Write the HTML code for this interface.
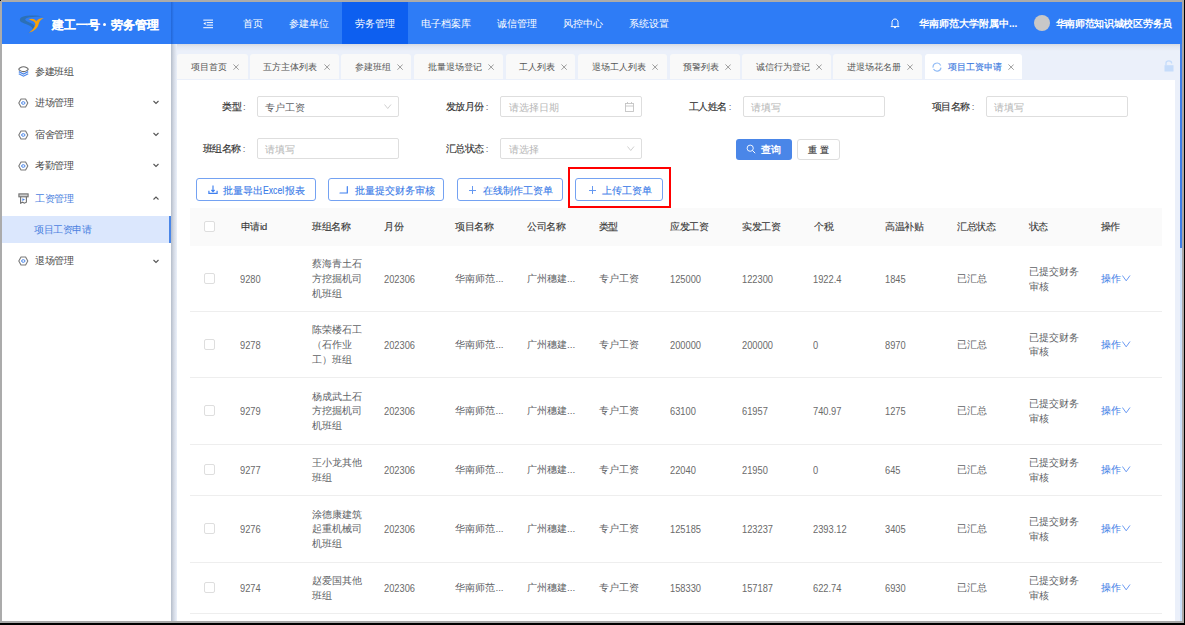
<!DOCTYPE html><html><head><meta charset="utf-8"><style>
*{box-sizing:border-box;margin:0;padding:0}
html,body{width:1185px;height:625px;overflow:hidden;background:#000}
body{position:relative;font-family:"Liberation Sans",sans-serif;font-size:10px;color:#606266}
.a{position:absolute;white-space:nowrap}
svg{display:block}
.nav{top:2px;height:42px;line-height:44px;color:#fff;font-size:9.5px;text-align:center}
.mi{letter-spacing:-0.45px;font-size:9.6px;color:#4a4a4a;line-height:14px;height:14px}
.tab{top:54px;height:25px;background:#f9f9f9;border-radius:3px 3px 0 0}
.tt{font-size:9.3px;color:#555;line-height:12px;height:12px;top:61px}
.lbl{letter-spacing:-0.45px;font-size:9.5px;color:#333;-webkit-text-stroke:0.15px #333;line-height:14px;height:14px}
.lbl i{font-style:normal;color:#666;-webkit-text-stroke:0;margin-left:2px}
.inp{height:21px;width:142px;border:1px solid #dedede;border-radius:2px;background:#fff}
.ph{font-size:9.75px;color:#b5b5b5;line-height:14px;height:14px}
.btn{height:23px;border:1px solid #74a2f2;border-radius:3px;background:#fff}
.bt{font-size:9.8px;color:#3a7be8;-webkit-text-stroke:0.12px #3a7be8;line-height:14px;height:14px}
.th{letter-spacing:-0.45px;color:#383838;-webkit-text-stroke:0.12px #383838;font-size:9.85px;line-height:14px;height:14px}
.md{-webkit-text-stroke:0.12px currentColor}
.td.dg{font-size:10.8px;transform:scaleX(0.86);transform-origin:0 0;color:#6a6a6a}
.td{font-size:9.85px;color:#606266;line-height:14.7px}
.rb{left:190px;width:972px;height:1px;background:#eeeeee}
.cb{width:11px;height:11px;border:1px solid #dedede;border-radius:2px;background:#fff}
</style></head><body>
<div class="a " style="left:0;top:0;width:1185px;height:625px;background:#000"></div>
<div class="a " style="left:1px;top:0;width:1183px;height:2px;background:#ababab"></div>
<div class="a " style="left:0;top:1px;width:1183px;height:1px;background:#aeaba6"></div>
<div class="a " style="left:0;top:1px;width:2px;height:622px;background:#ababab"></div>
<div class="a " style="left:1182px;top:1px;width:2px;height:622px;background:#a9a8a6"></div>
<div class="a " style="left:0;top:621px;width:1184px;height:2px;background:#a8a8a8"></div>
<div class="a " style="left:2px;top:2px;width:1180px;height:619px;background:#ebf0fa"></div>
<div class="a " style="left:2px;top:2px;width:1180px;height:42px;background:#2e7cf6"></div>
<div class="a " style="left:16px;top:12px;width:32px;height:24px"><svg width="32" height="24" viewBox="16 12 32 24">
<path d="M43.6 16.6 C38 15.2 27 14.8 22 17 C19 18.5 19.5 21 21.5 22.3 C24.5 24 31 25 32.5 28.5 C33 30.5 30 32 27.5 33 C31 31 35 29.5 34.6 26.5 C34 23.5 28 22.3 25.8 20.5 C24.5 19 26 17.8 30 17.2 C35 16.5 40 16.3 43.6 16.6 Z" fill="#2c70b6"/>
<path d="M28.7 19.8 C31 18.2 34.5 18.6 36.2 21.2 C38 19.3 41 18 43.6 18.1 C41.5 19.3 39.5 21 38.8 23.5 C38 27.5 35 31 28.7 32.8 C32 30.5 34.8 27.5 35.4 24.5 C35.6 22.5 33 20.5 28.7 19.8 Z" fill="#f6a10b"/>
</svg></div>
<div class="a " style="left:51.5px;top:16.5px;font-size:11.5px;font-weight:bold;color:#fff;line-height:16px;-webkit-text-stroke:0.1px #fff">建工一号</div>
<div class="a " style="left:110.5px;top:16.5px;font-size:11.5px;font-weight:bold;color:#fff;line-height:16px;-webkit-text-stroke:0.1px #fff">劳务管理</div>
<div class="a " style="left:102.5px;top:22.5px;width:3.2px;height:3.2px;border-radius:50%;background:#fff"></div>
<div class="a " style="left:171px;top:2px;width:3px;height:42px;background:linear-gradient(to right,rgba(0,40,120,.25),rgba(0,40,120,0))"></div>
<div class="a " style="left:203px;top:19px;width:11px;height:10px"><svg width="11" height="10" viewBox="0 0 11 10"><rect x="0.3" y="0.6" width="9.7" height="1" fill="#fff"/><rect x="3.6" y="3.1" width="6.4" height="1" fill="#fff"/><rect x="3.6" y="5.6" width="6.4" height="1" fill="#fff"/><rect x="0.3" y="8.2" width="9.7" height="1" fill="#fff"/><path d="M0.4 4.4 L2.6 2.9 L2.6 5.9 Z" fill="#fff"/></svg></div>
<div class="a nav" style="left:230px;width:46px;">首页</div>
<div class="a nav" style="left:276px;width:66px;">参建单位</div>
<div class="a nav" style="left:342px;width:66px;background:#0d5ff0;">劳务管理</div>
<div class="a nav" style="left:408px;width:76px;">电子档案库</div>
<div class="a nav" style="left:484px;width:66px;">诚信管理</div>
<div class="a nav" style="left:550px;width:66px;">风控中心</div>
<div class="a nav" style="left:616px;width:66px;">系统设置</div>
<div class="a " style="left:890px;top:18px;width:10px;height:11px"><svg width="10" height="11" viewBox="0 0 10 11"><path d="M5 1 C2.8 1 2 2.8 2 4.5 L2 7.5 L1 8.6 L9 8.6 L8 7.5 L8 4.5 C8 2.8 7.2 1 5 1 Z" fill="none" stroke="#fff" stroke-width="1"/><path d="M4 9.6 L6 9.6" stroke="#fff" stroke-width="1"/></svg></div>
<div class="a " style="left:919px;top:17px;font-size:10px;font-weight:bold;color:#fff;line-height:14px">华南师范大学附属中...</div>
<div class="a " style="left:1034px;top:15px;width:16px;height:16px;border-radius:50%;background:#c8c8c8"></div>
<div class="a " style="left:1055.5px;top:17px;font-size:10px;font-weight:bold;color:#fff;line-height:14px;letter-spacing:-0.3px">华南师范知识城校区劳务员</div>
<div class="a " style="left:2px;top:44px;width:169px;height:577px;background:#fff"></div>
<div class="a " style="left:171px;top:44px;width:1009px;height:7px;background:linear-gradient(to bottom,#d6dae2,#e4e8f1 40%,#ebf0fa)"></div>
<div class="a " style="left:171px;top:44px;width:6px;height:577px;background:linear-gradient(to right,#b5bdca,#d3d9e4 45%,#ebf0fa)"></div>
<div class="a" style="left:17.5px;top:65.5px;width:11px;height:11px"><svg width="11" height="11" viewBox="0 0 11 11"><path d="M5.5 0.8 C8 0.8 10.2 2.6 10.2 3.2 C10.2 3.8 8 5.6 5.5 5.6 C3 5.6 0.8 3.8 0.8 3.2 C0.8 2.6 3 0.8 5.5 0.8 Z" fill="none" stroke="#6a6a6a" stroke-width="1.1"/><path d="M0.8 5.6 L5.5 8 L10.2 5.6" fill="none" stroke="#4a86e8" stroke-width="1.2"/><path d="M0.8 7.8 L5.5 10.2 L10.2 7.8" fill="none" stroke="#4a86e8" stroke-width="1.2"/></svg></div>
<div class="a mi" style="left:35px;top:65.2px">参建班组</div>
<div class="a" style="left:17.5px;top:97.6px;width:11px;height:10px"><svg width="11" height="10" viewBox="0 0 11 10"><path d="M3 1 L7.6 1 L9.8 5 L7.6 9 L3 9 L0.8 5 Z" fill="none" stroke="#7a7a7a" stroke-width="1.1" stroke-linejoin="round"/><ellipse cx="5.3" cy="5" rx="1.7" ry="1.3" fill="none" stroke="#4a86e8" stroke-width="1"/></svg></div>
<div class="a mi" style="left:35px;top:96.0px">进场管理</div>
<div class="a" style="left:153px;top:100.1px;width:6px;height:5px"><svg width="6" height="5" viewBox="0 0 6 5"><path d="M0.5 1 L3 3.5 L5.5 1" fill="none" stroke="#555" stroke-width="1.1"/></svg></div>
<div class="a" style="left:17.5px;top:129.8px;width:11px;height:10px"><svg width="11" height="10" viewBox="0 0 11 10"><path d="M3 1 L7.6 1 L9.8 5 L7.6 9 L3 9 L0.8 5 Z" fill="none" stroke="#7a7a7a" stroke-width="1.1" stroke-linejoin="round"/><ellipse cx="5.3" cy="5" rx="1.7" ry="1.3" fill="none" stroke="#4a86e8" stroke-width="1"/></svg></div>
<div class="a mi" style="left:35px;top:128.20000000000002px">宿舍管理</div>
<div class="a" style="left:153px;top:132.3px;width:6px;height:5px"><svg width="6" height="5" viewBox="0 0 6 5"><path d="M0.5 1 L3 3.5 L5.5 1" fill="none" stroke="#555" stroke-width="1.1"/></svg></div>
<div class="a" style="left:17.5px;top:160.9px;width:11px;height:10px"><svg width="11" height="10" viewBox="0 0 11 10"><path d="M3 1 L7.6 1 L9.8 5 L7.6 9 L3 9 L0.8 5 Z" fill="none" stroke="#7a7a7a" stroke-width="1.1" stroke-linejoin="round"/><ellipse cx="5.3" cy="5" rx="1.7" ry="1.3" fill="none" stroke="#4a86e8" stroke-width="1"/></svg></div>
<div class="a mi" style="left:35px;top:159.3px">考勤管理</div>
<div class="a" style="left:153px;top:163.4px;width:6px;height:5px"><svg width="6" height="5" viewBox="0 0 6 5"><path d="M0.5 1 L3 3.5 L5.5 1" fill="none" stroke="#555" stroke-width="1.1"/></svg></div>
<div class="a" style="left:17.5px;top:192.5px;width:11px;height:11px"><svg width="11" height="11" viewBox="0 0 11 11"><rect x="0.9" y="0.9" width="9.2" height="2.9" fill="#cfcfcf" stroke="#707070" stroke-width="1.1"/><path d="M2.6 3.8 L2.6 10.2 L4.6 9.2 L6.4 10.2 L8.4 9.2 L8.4 3.8" fill="none" stroke="#707070" stroke-width="1.1"/><path d="M4.4 5.3 L7 6.6 L4.4 7.9 Z" fill="#4a86e8"/></svg></div>
<div class="a mi" style="left:35px;top:191.5px;color:#4a7fe0">工资管理</div>
<div class="a" style="left:153px;top:195.6px;width:6px;height:5px"><svg width="6" height="5" viewBox="0 0 6 5"><path d="M0.5 3.5 L3 1 L5.5 3.5" fill="none" stroke="#555" stroke-width="1.1"/></svg></div>
<div class="a " style="left:2px;top:216px;width:169px;height:26.5px;background:#dbe7fd"></div>
<div class="a " style="left:169px;top:216px;width:2px;height:26.5px;background:#4a86e8"></div>
<div class="a mi" style="left:34px;top:222.5px;color:#4a7fe0">项目工资申请</div>
<div class="a" style="left:17.5px;top:256px;width:11px;height:10px"><svg width="11" height="10" viewBox="0 0 11 10"><path d="M3 1 L7.6 1 L9.8 5 L7.6 9 L3 9 L0.8 5 Z" fill="none" stroke="#7a7a7a" stroke-width="1.1" stroke-linejoin="round"/><ellipse cx="5.3" cy="5" rx="1.7" ry="1.3" fill="none" stroke="#4a86e8" stroke-width="1"/></svg></div>
<div class="a mi" style="left:35px;top:254.4px">退场管理</div>
<div class="a" style="left:153px;top:258.5px;width:6px;height:5px"><svg width="6" height="5" viewBox="0 0 6 5"><path d="M0.5 1 L3 3.5 L5.5 1" fill="none" stroke="#555" stroke-width="1.1"/></svg></div>
<div class="a tab" style="left:177px;width:70.6px;"></div>
<div class="a tt" style="left:190.5px">项目首页</div>
<div class="a" style="left:232.5px;top:63.7px;width:7px;height:7px"><svg width="6.2" height="6.2" viewBox="0 0 7 7"><path d="M0.5 0.5 L6.5 6.5 M6.5 0.5 L0.5 6.5" stroke="#777" stroke-width="0.8"/></svg></div>
<div class="a tab" style="left:249.9px;width:88.79999999999998px;"></div>
<div class="a tt" style="left:263.4px">五方主体列表</div>
<div class="a" style="left:324.0px;top:63.7px;width:7px;height:7px"><svg width="6.2" height="6.2" viewBox="0 0 7 7"><path d="M0.5 0.5 L6.5 6.5 M6.5 0.5 L0.5 6.5" stroke="#777" stroke-width="0.8"/></svg></div>
<div class="a tab" style="left:341px;width:70px;"></div>
<div class="a tt" style="left:354.5px">参建班组</div>
<div class="a" style="left:396.5px;top:63.7px;width:7px;height:7px"><svg width="6.2" height="6.2" viewBox="0 0 7 7"><path d="M0.5 0.5 L6.5 6.5 M6.5 0.5 L0.5 6.5" stroke="#777" stroke-width="0.8"/></svg></div>
<div class="a tab" style="left:414.1px;width:88.69999999999999px;"></div>
<div class="a tt" style="left:427.6px">批量退场登记</div>
<div class="a" style="left:488.20000000000005px;top:63.7px;width:7px;height:7px"><svg width="6.2" height="6.2" viewBox="0 0 7 7"><path d="M0.5 0.5 L6.5 6.5 M6.5 0.5 L0.5 6.5" stroke="#777" stroke-width="0.8"/></svg></div>
<div class="a tab" style="left:505.7px;width:69.40000000000003px;"></div>
<div class="a tt" style="left:519.2px">工人列表</div>
<div class="a" style="left:561.2px;top:63.7px;width:7px;height:7px"><svg width="6.2" height="6.2" viewBox="0 0 7 7"><path d="M0.5 0.5 L6.5 6.5 M6.5 0.5 L0.5 6.5" stroke="#777" stroke-width="0.8"/></svg></div>
<div class="a tab" style="left:578px;width:88.79999999999995px;"></div>
<div class="a tt" style="left:591.5px">退场工人列表</div>
<div class="a" style="left:652.0999999999999px;top:63.7px;width:7px;height:7px"><svg width="6.2" height="6.2" viewBox="0 0 7 7"><path d="M0.5 0.5 L6.5 6.5 M6.5 0.5 L0.5 6.5" stroke="#777" stroke-width="0.8"/></svg></div>
<div class="a tab" style="left:669.8px;width:69.90000000000009px;"></div>
<div class="a tt" style="left:683.3px">预警列表</div>
<div class="a" style="left:725.3px;top:63.7px;width:7px;height:7px"><svg width="6.2" height="6.2" viewBox="0 0 7 7"><path d="M0.5 0.5 L6.5 6.5 M6.5 0.5 L0.5 6.5" stroke="#777" stroke-width="0.8"/></svg></div>
<div class="a tab" style="left:742px;width:88.89999999999998px;"></div>
<div class="a tt" style="left:755.5px">诚信行为登记</div>
<div class="a" style="left:816.0999999999999px;top:63.7px;width:7px;height:7px"><svg width="6.2" height="6.2" viewBox="0 0 7 7"><path d="M0.5 0.5 L6.5 6.5 M6.5 0.5 L0.5 6.5" stroke="#777" stroke-width="0.8"/></svg></div>
<div class="a tab" style="left:833.2px;width:88.69999999999993px;"></div>
<div class="a tt" style="left:846.7px">进退场花名册</div>
<div class="a" style="left:907.3px;top:63.7px;width:7px;height:7px"><svg width="6.2" height="6.2" viewBox="0 0 7 7"><path d="M0.5 0.5 L6.5 6.5 M6.5 0.5 L0.5 6.5" stroke="#777" stroke-width="0.8"/></svg></div>
<div class="a tab" style="left:924.9px;width:97.60000000000002px;background:#fff;"></div>
<div class="a" style="left:932.2px;top:61.6px;width:10px;height:10px"><svg width="10" height="10" viewBox="0 0 10 10"><path d="M1.1 5.6 A4 4 0 0 1 8.7 3.4" fill="none" stroke="#94bdf6" stroke-width="1.2"/><path d="M9 5.6 A4 4 0 0 1 1.5 7" fill="none" stroke="#94bdf6" stroke-width="1.2"/></svg></div>
<div class="a tt" style="left:947.5px;color:#3e7be0;-webkit-text-stroke:0.15px #3e7be0">项目工资申请</div>
<div class="a" style="left:1007.5px;top:63.8px;width:7px;height:7px"><svg width="6.2" height="6.2" viewBox="0 0 7 7"><path d="M0.5 0.5 L6.5 6.5 M6.5 0.5 L0.5 6.5" stroke="#777" stroke-width="0.8"/></svg></div>
<div class="a" style="left:1164px;top:60px;width:10px;height:12px"><svg width="10" height="12" viewBox="0 0 10 12"><path d="M2 5.5 L2 3 C2 1.5 3.2 0.8 4.8 0.8 C6.5 0.8 7.6 1.5 7.6 3 L7.6 3.5" fill="none" stroke="#c6dcfa" stroke-width="1.3"/><rect x="0.5" y="5.2" width="9" height="6.3" fill="#c6dcfa"/></svg></div>
<div class="a " style="left:177px;top:80px;width:998px;height:541px;background:#fff"></div>
<div class="a lbl" style="left:222px;top:99.5px">类型<i>:</i></div>
<div class="a inp" style="left:257px;top:96px"></div>
<div class="a ph" style="left:265px;top:100.5px;color:#606266">专户工资</div>
<div class="a" style="left:383.5px;top:104px;width:8px;height:6px"><svg width="8" height="6" viewBox="0 0 8 6"><path d="M0.5 0.5 L3.75 4.5 L7 0.5" fill="none" stroke="#c4c4c4" stroke-width="0.8"/></svg></div>
<div class="a lbl" style="left:445.5px;top:99.5px">发放月份<i>:</i></div>
<div class="a inp" style="left:500px;top:96px"></div>
<div class="a ph" style="left:508.5px;top:100.5px">请选择日期</div>
<div class="a" style="left:625px;top:102px;width:9px;height:10px"><svg width="9" height="10" viewBox="0 0 9 10"><rect x="0.5" y="1.5" width="8" height="8" fill="none" stroke="#c4c4c4" stroke-width="0.9"/><path d="M0.5 4 L8.5 4 M2.5 0 L2.5 2 M6.5 0 L6.5 2" stroke="#c4c4c4" stroke-width="0.9"/></svg></div>
<div class="a lbl" style="left:688.5px;top:99.5px">工人姓名<i>:</i></div>
<div class="a inp" style="left:743px;top:96px"></div>
<div class="a ph" style="left:751px;top:100.5px">请填写</div>
<div class="a lbl" style="left:931.5px;top:99.5px">项目名称<i>:</i></div>
<div class="a inp" style="left:986px;top:96px"></div>
<div class="a ph" style="left:994px;top:100.5px">请填写</div>
<div class="a lbl" style="left:202.5px;top:141.5px">班组名称<i>:</i></div>
<div class="a inp" style="left:257px;top:138px"></div>
<div class="a ph" style="left:265px;top:142.5px">请填写</div>
<div class="a lbl" style="left:445.5px;top:141.5px">汇总状态<i>:</i></div>
<div class="a inp" style="left:500px;top:138px"></div>
<div class="a ph" style="left:508.5px;top:142.5px">请选择</div>
<div class="a" style="left:626.5px;top:146px;width:8px;height:6px"><svg width="8" height="6" viewBox="0 0 8 6"><path d="M0.5 0.5 L3.75 4.5 L7 0.5" fill="none" stroke="#c4c4c4" stroke-width="0.8"/></svg></div>
<div class="a " style="left:735.5px;top:139px;width:56px;height:21px;background:#4a86e8;border-radius:3px"></div>
<div class="a" style="left:746px;top:144px;width:10px;height:10px"><svg width="10" height="10" viewBox="0 0 10 10"><circle cx="4.2" cy="4.2" r="3.1" fill="none" stroke="#fff" stroke-width="0.9"/><path d="M6.5 6.5 L9.2 9.2" stroke="#fff" stroke-width="1"/></svg></div>
<div class="a " style="left:761px;top:143px;font-size:9.8px;font-weight:bold;color:#fff;line-height:14px">查询</div>
<div class="a " style="left:797px;top:139px;width:43px;height:21px;border:1px solid #dedede;border-radius:3px;background:#fff"></div>
<div class="a md" style="left:808px;top:143px;font-size:9.3px;color:#333;line-height:14px">重</div>
<div class="a md" style="left:820.3px;top:143px;font-size:9.3px;color:#333;line-height:14px">置</div>
<div class="a btn" style="left:196px;top:178px;width:119.5px"></div>
<div class="a bt" style="left:223.3px;top:183.5px">批量导出<span style="display:inline-block;width:21.8px;font-size:10.4px;transform:scaleX(0.83);transform-origin:0 50%">Excel</span>报表</div>
<div class="a" style="left:207.5px;top:185px;width:10px;height:10px"><svg width="10" height="10" viewBox="0 0 10 10"><path d="M5 0.6 L5 6.6 M3.4 5 L5 6.6 L6.6 5" fill="none" stroke="#3f80f0" stroke-width="1.15"/><path d="M0.9 5.8 L0.9 8.3 L9.1 8.3 L9.1 5.8" fill="none" stroke="#3f80f0" stroke-width="1.2"/></svg></div>
<div class="a btn" style="left:327.6px;top:178px;width:116.89999999999998px"></div>
<div class="a bt" style="left:354.5px;top:183.5px">批量提交财务审核</div>
<div class="a" style="left:339.2px;top:185.5px;width:10px;height:9px"><svg width="10" height="9" viewBox="0 0 10 9"><path d="M8.3 0.6 L8.3 7 L1 7" fill="none" stroke="#3f80f0" stroke-width="1.2" stroke-linecap="round"/></svg></div>
<div class="a btn" style="left:456.5px;top:178px;width:106.89999999999998px"></div>
<div class="a bt" style="left:483.2px;top:183.5px">在线制作工资单</div>
<div class="a" style="left:469.4px;top:186px;width:8px;height:8px"><svg width="8" height="8" viewBox="0 0 8 8"><path d="M3.5 0 L3.5 8 M0 4.5 L7 4.5" stroke="#5f94f0" stroke-width="0.95"/></svg></div>
<div class="a btn" style="left:575.4px;top:178px;width:87.20000000000005px"></div>
<div class="a bt" style="left:602.4px;top:183.5px">上传工资单</div>
<div class="a" style="left:588.6px;top:186px;width:8px;height:8px"><svg width="8" height="8" viewBox="0 0 8 8"><path d="M3.5 0 L3.5 8 M0 4.5 L7 4.5" stroke="#5f94f0" stroke-width="0.95"/></svg></div>
<div class="a " style="left:567.5px;top:166.5px;width:103px;height:41px;border:2.5px solid #ff0000"></div>
<div class="a " style="left:190px;top:208px;width:972px;height:38px;background:#fafafa"></div>
<div class="a cb" style="left:204px;top:221px"></div>
<div class="a th" style="left:240.8px;top:220px">申请id</div>
<div class="a th" style="left:312px;top:220px">班组名称</div>
<div class="a th" style="left:384.2px;top:220px">月份</div>
<div class="a th" style="left:455.4px;top:220px">项目名称</div>
<div class="a th" style="left:527px;top:220px">公司名称</div>
<div class="a th" style="left:598.9px;top:220px">类型</div>
<div class="a th" style="left:670.4px;top:220px">应发工资</div>
<div class="a th" style="left:742.3px;top:220px">实发工资</div>
<div class="a th" style="left:814.1px;top:220px">个税</div>
<div class="a th" style="left:885.3px;top:220px">高温补贴</div>
<div class="a th" style="left:957.4px;top:220px">汇总状态</div>
<div class="a th" style="left:1028.9px;top:220px">状态</div>
<div class="a th" style="left:1100.5px;top:220px">操作</div>
<div class="a cb" style="left:204px;top:273.0px"></div>
<div class="a td dg" style="left:240.10000000000002px;top:271.75px">9280</div>
<div class="a td" style="left:312px;top:257.45px;white-space:normal">蔡海青土石<br>方挖掘机司<br>机班组</div>
<div class="a td dg" style="left:383.5px;top:271.75px">202306</div>
<div class="a td" style="left:455.4px;top:272.15px">华南师范...</div>
<div class="a td" style="left:527px;top:272.15px">广州穗建...</div>
<div class="a td" style="left:598.9px;top:272.15px">专户工资</div>
<div class="a td dg" style="left:669.6999999999999px;top:271.75px">125000</div>
<div class="a td dg" style="left:741.5999999999999px;top:271.75px">122300</div>
<div class="a td dg" style="left:813.4px;top:271.75px">1922.4</div>
<div class="a td dg" style="left:884.5999999999999px;top:271.75px">1845</div>
<div class="a td" style="left:957.4px;top:272.15px">已汇总</div>
<div class="a td" style="left:1028.9px;top:264.8px">已提交财务<br>审核</div>
<div class="a td" style="left:1100.5px;top:271.9px;color:#3f7de6">操作</div>
<div class="a" style="left:1121.5px;top:275.1px;width:9px;height:7px"><svg width="9" height="7" viewBox="0 0 9 7"><path d="M0.4 0.5 L4.2 5.8 L8 0.5" fill="none" stroke="#5b8ff0" stroke-width="0.9"/></svg></div>
<div class="a rb" style="top:310.5px"></div>
<div class="a cb" style="left:204px;top:338.75px"></div>
<div class="a td dg" style="left:240.10000000000002px;top:337.5px">9278</div>
<div class="a td" style="left:312px;top:323.2px;white-space:normal">陈荣楼石工<br>（石作业<br>工）班组</div>
<div class="a td dg" style="left:383.5px;top:337.5px">202306</div>
<div class="a td" style="left:455.4px;top:337.9px">华南师范...</div>
<div class="a td" style="left:527px;top:337.9px">广州穗建...</div>
<div class="a td" style="left:598.9px;top:337.9px">专户工资</div>
<div class="a td dg" style="left:669.6999999999999px;top:337.5px">200000</div>
<div class="a td dg" style="left:741.5999999999999px;top:337.5px">200000</div>
<div class="a td dg" style="left:813.4px;top:337.5px">0</div>
<div class="a td dg" style="left:884.5999999999999px;top:337.5px">8970</div>
<div class="a td" style="left:957.4px;top:337.9px">已汇总</div>
<div class="a td" style="left:1028.9px;top:330.55px">已提交财务<br>审核</div>
<div class="a td" style="left:1100.5px;top:337.65px;color:#3f7de6">操作</div>
<div class="a" style="left:1121.5px;top:340.85px;width:9px;height:7px"><svg width="9" height="7" viewBox="0 0 9 7"><path d="M0.4 0.5 L4.2 5.8 L8 0.5" fill="none" stroke="#5b8ff0" stroke-width="0.9"/></svg></div>
<div class="a rb" style="top:377.0px"></div>
<div class="a cb" style="left:204px;top:405.25px"></div>
<div class="a td dg" style="left:240.10000000000002px;top:404.0px">9279</div>
<div class="a td" style="left:312px;top:389.7px;white-space:normal">杨成武土石<br>方挖掘机司<br>机班组</div>
<div class="a td dg" style="left:383.5px;top:404.0px">202306</div>
<div class="a td" style="left:455.4px;top:404.4px">华南师范...</div>
<div class="a td" style="left:527px;top:404.4px">广州穗建...</div>
<div class="a td" style="left:598.9px;top:404.4px">专户工资</div>
<div class="a td dg" style="left:669.6999999999999px;top:404.0px">63100</div>
<div class="a td dg" style="left:741.5999999999999px;top:404.0px">61957</div>
<div class="a td dg" style="left:813.4px;top:404.0px">740.97</div>
<div class="a td dg" style="left:884.5999999999999px;top:404.0px">1275</div>
<div class="a td" style="left:957.4px;top:404.4px">已汇总</div>
<div class="a td" style="left:1028.9px;top:397.05px">已提交财务<br>审核</div>
<div class="a td" style="left:1100.5px;top:404.15px;color:#3f7de6">操作</div>
<div class="a" style="left:1121.5px;top:407.35px;width:9px;height:7px"><svg width="9" height="7" viewBox="0 0 9 7"><path d="M0.4 0.5 L4.2 5.8 L8 0.5" fill="none" stroke="#5b8ff0" stroke-width="0.9"/></svg></div>
<div class="a rb" style="top:443.5px"></div>
<div class="a cb" style="left:204px;top:464.15px"></div>
<div class="a td dg" style="left:240.10000000000002px;top:462.9px">9277</div>
<div class="a td" style="left:312px;top:455.95px;white-space:normal">王小龙其他<br>班组</div>
<div class="a td dg" style="left:383.5px;top:462.9px">202306</div>
<div class="a td" style="left:455.4px;top:463.29999999999995px">华南师范...</div>
<div class="a td" style="left:527px;top:463.29999999999995px">广州穗建...</div>
<div class="a td" style="left:598.9px;top:463.29999999999995px">专户工资</div>
<div class="a td dg" style="left:669.6999999999999px;top:462.9px">22040</div>
<div class="a td dg" style="left:741.5999999999999px;top:462.9px">21950</div>
<div class="a td dg" style="left:813.4px;top:462.9px">0</div>
<div class="a td dg" style="left:884.5999999999999px;top:462.9px">645</div>
<div class="a td" style="left:957.4px;top:463.29999999999995px">已汇总</div>
<div class="a td" style="left:1028.9px;top:455.95px">已提交财务<br>审核</div>
<div class="a td" style="left:1100.5px;top:463.04999999999995px;color:#3f7de6">操作</div>
<div class="a" style="left:1121.5px;top:466.25px;width:9px;height:7px"><svg width="9" height="7" viewBox="0 0 9 7"><path d="M0.4 0.5 L4.2 5.8 L8 0.5" fill="none" stroke="#5b8ff0" stroke-width="0.9"/></svg></div>
<div class="a rb" style="top:494.8px"></div>
<div class="a cb" style="left:204px;top:523.15px"></div>
<div class="a td dg" style="left:240.10000000000002px;top:521.9px">9276</div>
<div class="a td" style="left:312px;top:507.59999999999997px;white-space:normal">涂德康建筑<br>起重机械司<br>机班组</div>
<div class="a td dg" style="left:383.5px;top:521.9px">202306</div>
<div class="a td" style="left:455.4px;top:522.3px">华南师范...</div>
<div class="a td" style="left:527px;top:522.3px">广州穗建...</div>
<div class="a td" style="left:598.9px;top:522.3px">专户工资</div>
<div class="a td dg" style="left:669.6999999999999px;top:521.9px">125185</div>
<div class="a td dg" style="left:741.5999999999999px;top:521.9px">123237</div>
<div class="a td dg" style="left:813.4px;top:521.9px">2393.12</div>
<div class="a td dg" style="left:884.5999999999999px;top:521.9px">3405</div>
<div class="a td" style="left:957.4px;top:522.3px">已汇总</div>
<div class="a td" style="left:1028.9px;top:514.9499999999999px">已提交财务<br>审核</div>
<div class="a td" style="left:1100.5px;top:522.05px;color:#3f7de6">操作</div>
<div class="a" style="left:1121.5px;top:525.25px;width:9px;height:7px"><svg width="9" height="7" viewBox="0 0 9 7"><path d="M0.4 0.5 L4.2 5.8 L8 0.5" fill="none" stroke="#5b8ff0" stroke-width="0.9"/></svg></div>
<div class="a rb" style="top:561.5px"></div>
<div class="a cb" style="left:204px;top:582.1px"></div>
<div class="a td dg" style="left:240.10000000000002px;top:580.85px">9274</div>
<div class="a td" style="left:312px;top:573.9px;white-space:normal">赵爱国其他<br>班组</div>
<div class="a td dg" style="left:383.5px;top:580.85px">202306</div>
<div class="a td" style="left:455.4px;top:581.25px">华南师范...</div>
<div class="a td" style="left:527px;top:581.25px">广州穗建...</div>
<div class="a td" style="left:598.9px;top:581.25px">专户工资</div>
<div class="a td dg" style="left:669.6999999999999px;top:580.85px">158330</div>
<div class="a td dg" style="left:741.5999999999999px;top:580.85px">157187</div>
<div class="a td dg" style="left:813.4px;top:580.85px">622.74</div>
<div class="a td dg" style="left:884.5999999999999px;top:580.85px">6930</div>
<div class="a td" style="left:957.4px;top:581.25px">已汇总</div>
<div class="a td" style="left:1028.9px;top:573.9px">已提交财务<br>审核</div>
<div class="a td" style="left:1100.5px;top:581.0px;color:#3f7de6">操作</div>
<div class="a" style="left:1121.5px;top:584.2px;width:9px;height:7px"><svg width="9" height="7" viewBox="0 0 9 7"><path d="M0.4 0.5 L4.2 5.8 L8 0.5" fill="none" stroke="#5b8ff0" stroke-width="0.9"/></svg></div>
<div class="a rb" style="top:612.7px"></div>
<div class="a " style="left:1180px;top:44px;width:2px;height:577px;background:#cbe0fb"></div>
<div class="a " style="left:1180px;top:44px;width:2px;height:204px;background:#3f7fe8"></div>
</body></html>
